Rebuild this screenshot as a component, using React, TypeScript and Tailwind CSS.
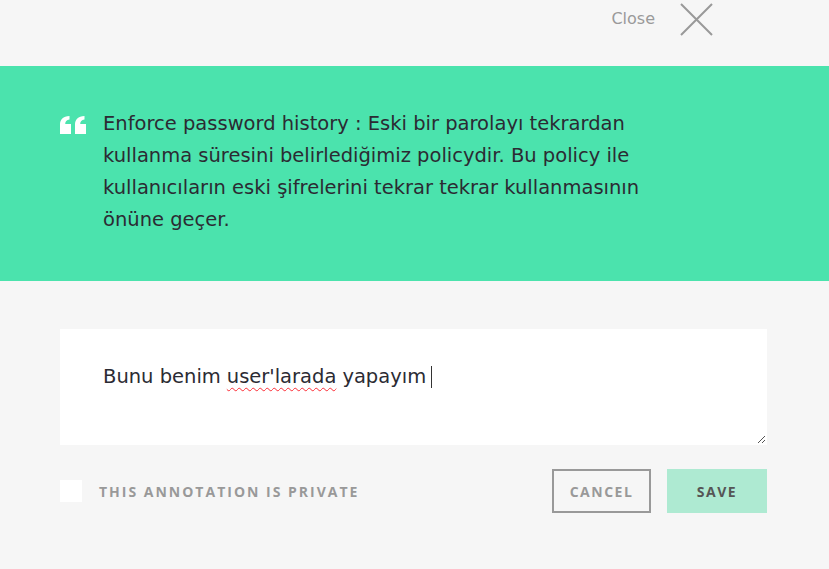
export default function App() {
  return (
    <div className="min-h-[569px] w-full bg-[#f6f6f6]" style={{ fontFamily: '"Open Sans", sans-serif' }}>
      {/* Top bar */}
      <div className="h-[66px] flex items-start justify-end pr-[115px] pt-[3px]">
        <button className="flex items-center gap-[25px] text-[#9a9a9a] text-[16px]" style={{ fontFamily: '"DejaVu Sans", sans-serif' }}>
          <span className="-mt-[2px]">Close</span>
          <svg width="34" height="34" viewBox="0 0 34 34" fill="none" stroke="#999" strokeWidth="2">
            <path d="M1 1L32 32M32 1L1 32" />
          </svg>
        </button>
      </div>

      {/* Quote band */}
      <div className="h-[215px] bg-[#4be3ad] pl-[60px] pt-[42px]">
        <div className="flex gap-[17px]">
          <svg className="mt-[8px] shrink-0" width="26" height="18" viewBox="0 0 26 18" fill="#fff">
            <path d="M0 18V8.5C0 3.5 3 0.5 9.5 0V3.5C6.5 4 5.3 5.5 5.2 8H11V18Z" />
            <path d="M15 18V8.5C15 3.5 18 0.5 24.5 0V3.5C21.5 4 20.3 5.5 20.2 8H26V18Z" />
          </svg>
          <p className="text-[#2b2b33] text-[19.5px] leading-[32px]" style={{ fontFamily: '"DejaVu Sans", sans-serif' }}>
            Enforce password history : Eski bir parolayı tekrardan
            <br />
            kullanma süresini belirlediğimiz policydir. Bu policy ile
            <br />
            kullanıcıların eski şifrelerini tekrar tekrar kullanmasının
            <br />
            önüne geçer.
          </p>
        </div>
      </div>

      {/* Annotation form */}
      <div className="pl-[60px] pr-[62px] pt-[48px]">
        <div className="relative h-[116px] bg-white pl-[43px] pt-[32px]">
          <p className="text-[#2b2b33] text-[19.5px] leading-[32px] flex items-center" style={{ fontFamily: '"DejaVu Sans", sans-serif' }}>
            Bunu benim
            <span className="ml-[6px] underline decoration-wavy decoration-red-500 decoration-1 underline-offset-4">user'larada</span>
            <span className="ml-[6px]">yapayım</span>
            <span className="ml-[5px] inline-block w-px h-[22px] bg-[#333]" />
          </p>
          <svg className="absolute right-[1px] bottom-[1px]" width="9" height="9" viewBox="0 0 9 9" stroke="#555" strokeWidth="1">
            <path d="M1 8L8 1M5 8L8 5" />
          </svg>
        </div>

        <div className="flex items-center justify-between mt-[24px]">
          <label className="flex items-center gap-[17px]">
            <span className="w-[22px] h-[22px] bg-white" />
            <span className="text-[#999] text-[14px] font-bold uppercase tracking-[2px]">This annotation is private</span>
          </label>
          <div className="flex gap-[16px]">
            <button className="w-[99px] h-[44px] border-2 border-[#999] text-[#999] text-[14px] font-bold uppercase tracking-[1.5px]">
              Cancel
            </button>
            <button className="w-[100px] h-[44px] bg-[#aeead2] text-[#555] text-[14px] font-bold uppercase tracking-[1.5px]">
              Save
            </button>
          </div>
        </div>
      </div>
    </div>
  );
}
